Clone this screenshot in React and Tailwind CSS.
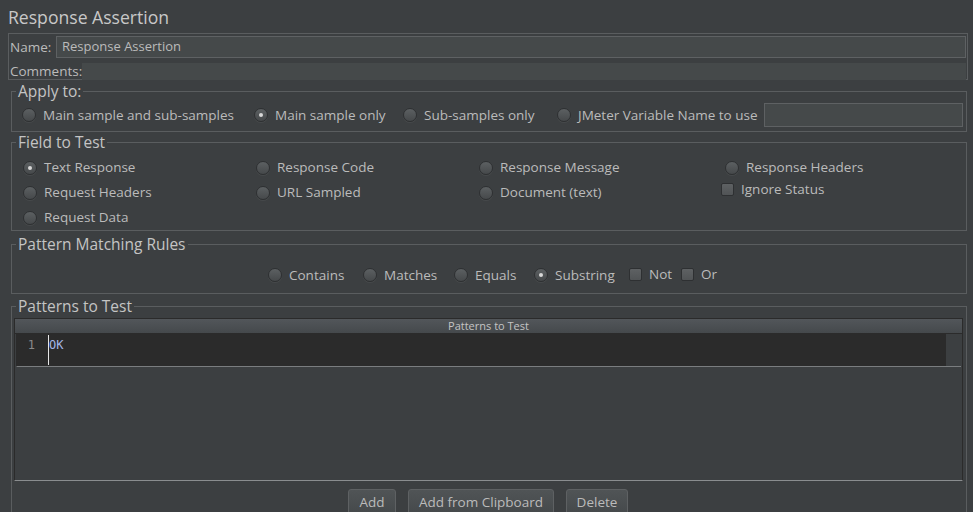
import React from "react";

/* ── small Swing-like widgets ── */
const Radio = ({ on }) => (
  <span className="w-[14px] h-[14px] rounded-full flex items-center justify-center shrink-0 border border-[#2e3032] bg-gradient-to-b from-[#5c6062] to-[#46494b] shadow-[0_1px_0_rgba(255,255,255,0.06)]">
    {on && <span className="w-[4px] h-[4px] rounded-full bg-[#d8d8d8]" />}
  </span>
);

const Check = () => (
  <span className="w-[13px] h-[13px] rounded-[2px] shrink-0 border border-[#2e3032] bg-gradient-to-b from-[#5e6163] to-[#515456]" />
);

const Opt = ({ on, label, w }) => (
  <div className="flex items-center gap-[7px] shrink-0" style={{ width: w }}>
    <Radio on={on} />
    <span className="whitespace-nowrap">{label}</span>
  </div>
);

const Box = ({ legend, className, children }) => (
  <fieldset className={`ml-[11px] w-[956px] border border-[#5a5d5f] ${className || ""}`}>
    <legend className="ml-[4px] px-[2px] text-[15.5px] leading-[18px] text-[#c4c4c4]">{legend}</legend>
    {children}
  </fieldset>
);

const Btn = ({ children, w }) => (
  <button className="h-[26px] rounded-[3px] border border-[#5e6163] bg-gradient-to-b from-[#505456] to-[#45494b] text-[#bbbbbb] text-[13.5px] shrink-0" style={{ width: w }}>
    {children}
  </button>
);

export default function App() {
  return (
    <div className="w-[973px] h-[512px] overflow-hidden bg-[#3c3f41] text-[#bbbbbb] text-[13.5px]" style={{ fontFamily: '"Open Sans", "DejaVu Sans", sans-serif' }}>
      {/* title */}
      <div className="h-[33px] pl-[8px] pt-[6px] text-[17.6px] leading-[22px] text-[#c8c8c8]">Response Assertion</div>

      {/* name / comments */}
      <div className="ml-[8px] w-[960px] h-[47px] border border-[#5a5d5f] flex flex-col">
        <div className="flex items-center h-[22px] mt-[2px]">
          <span className="pl-[1px] w-[47px]">Name:</span>
          <div className="flex-1 mr-[1px] h-[22px] border border-[#5e6163] bg-[#45494a] flex items-center pl-[5px] text-[13px]">Response Assertion</div>
        </div>
        <div className="flex items-center h-[17px] mt-[5px]">
          <span className="pl-[1px] w-[73px]">Comments:</span>
          <div className="flex-1 mr-[1px] h-[17px] bg-[#45494a]" />
        </div>
      </div>

      {/* apply to */}
      <Box legend="Apply to:" className="mt-[2px] pb-[1px]">
        <div className="h-[30px] flex items-center pl-[10px]">
          <Opt on={false} label="Main sample and sub-samples" w="232px" />
          <Opt on label="Main sample only" w="149px" />
          <Opt on={false} label="Sub-samples only" w="154px" />
          <Opt on={false} label="JMeter Variable Name to use" w="207px" />
          <div className="w-[199px] h-[24px] border border-[#5e6163] bg-[#45494a]" />
        </div>
      </Box>

      {/* field to test */}
      <Box legend="Field to Test" className="mt-[1px]">
        <div className="grid grid-cols-[233px_223px_246px_1fr] pl-[11px] pt-[4px]">
          <div className="h-[25px] flex items-center"><Opt on label="Text Response" /></div>
          <div className="h-[25px] flex items-center"><Opt on={false} label="Response Code" /></div>
          <div className="h-[25px] flex items-center"><Opt on={false} label="Response Message" /></div>
          <div className="h-[25px] flex items-center"><Opt on={false} label="Response Headers" /></div>
          <div className="h-[25px] flex items-center"><Opt on={false} label="Request Headers" /></div>
          <div className="h-[25px] flex items-center"><Opt on={false} label="URL Sampled" /></div>
          <div className="h-[25px] flex items-center"><Opt on={false} label="Document (text)" /></div>
          <div className="h-[25px] flex items-center -mt-[3px] -ml-[4px] gap-[7px]"><Check /><span>Ignore Status</span></div>
          <div className="h-[25px] flex items-center"><Opt on={false} label="Request Data" /></div>
        </div>
      </Box>

      {/* pattern matching rules */}
      <Box legend="Pattern Matching Rules" className="mt-[4px] pb-[6px]">
        <div className="h-[24px] mt-[10px] flex items-center pl-[256px]">
          <Opt on={false} label="Contains" w="95px" />
          <Opt on={false} label="Matches" w="91px" />
          <Opt on={false} label="Equals" w="80px" />
          <Opt on label="Substring" w="95px" />
          <div className="w-[52px] flex items-center gap-[7px] -mt-[2px]"><Check /><span>Not</span></div>
          <div className="flex items-center gap-[7px] -mt-[2px]"><Check /><span>Or</span></div>
        </div>
      </Box>

      {/* patterns to test */}
      <Box legend="Patterns to Test" className="mt-[3px] h-[240px]">
        <div className="pl-[2px] pt-[3px]">
          <div className="w-[949px] h-[163px] border border-[#2b2b2b] border-b-[#8a8d8f] flex flex-col">
            <div className="h-[15px] bg-gradient-to-b from-[#52565a] to-[#45494c] border-b border-[#2b2b2b] text-[11px] leading-[14px] text-center text-[#c4c4c4]">Patterns to Test</div>
            <div className="h-[33px] flex border-l border-[#2b2b2b] border-b border-b-[#7a7d7f] mx-[1px]">
              <div className="flex-1 bg-[#2b2b2b] flex">
                <div className="w-[31px] text-right pr-[13px] pt-[4px] text-[12px] leading-[14px] text-[#8a8a8a]" style={{ fontFamily: '"DejaVu Sans Mono", monospace' }}>1</div>
                <div className="w-[1px] h-[30px] mt-[1px] bg-[#e6e6e6]" />
                <div className="pt-[4px] text-[12px] leading-[14px] text-[#a3b6e6]" style={{ fontFamily: '"DejaVu Sans Mono", monospace' }}>OK</div>
              </div>
              <div className="w-[15px] bg-[#3c3f41]" />
            </div>
            <div className="flex-1" />
          </div>
          <div className="flex justify-center gap-[12px] mt-[8px] pr-[4px]">
            <Btn w="48px">Add</Btn>
            <Btn w="146px">Add from Clipboard</Btn>
            <Btn w="62px">Delete</Btn>
          </div>
        </div>
      </Box>
    </div>
  );
}
